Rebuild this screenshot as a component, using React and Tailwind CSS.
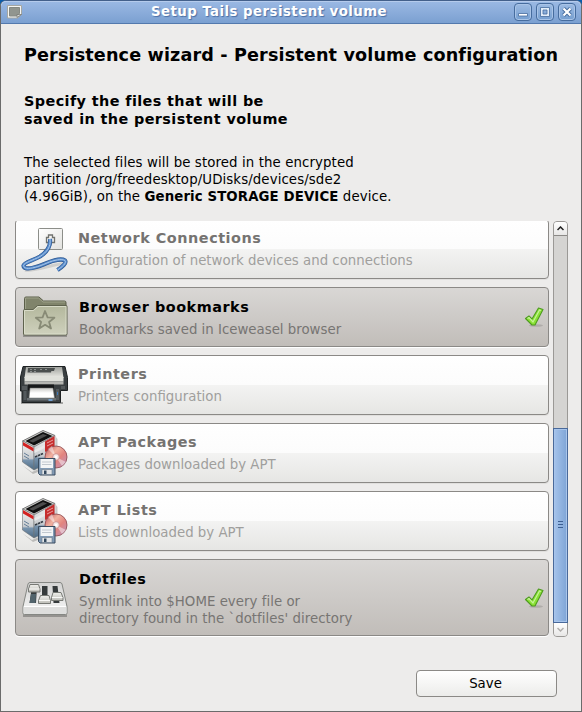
import React from "react";

const CABLE = "M29 14C30 22 26 27 19 31.500C12 35.500 3 37.500 2.500 40.500C3 46.500 17 42 26 38C33 35 41 33.500 44 35.500C46 38 41 42 36.500 45";

function NetworkIcon() {
  return (
    <svg width="48" height="48" viewBox="0 0 48 48" className="block overflow-visible">
      <defs>
        <linearGradient id="plate" x1="0" y1="0" x2="1" y2="1">
          <stop offset="0" stopColor="#fff" />
          <stop offset="1" stopColor="#e2e2df" />
        </linearGradient>
      </defs>
      <rect x="17.500" y="3.500" width="24" height="21" rx="1" fill="url(#plate)" stroke="#8c8e89" />
      <path d="M25.500 17.500v-5h2v-2.500h4v2.500h2v5z" fill="#f4f4f2" stroke="#70726e" strokeWidth="1.300" />
      <path d="M4 45C12 47 30 40 42 38.500" fill="none" stroke="#000" strokeOpacity=".12" strokeWidth="3" />
      <path d={CABLE} fill="none" stroke="#2c5690" strokeWidth="4.200" />
      <path d={CABLE} fill="none" stroke="#5488c8" strokeWidth="3" />
      <path d={CABLE} fill="none" stroke="#a9c7ea" strokeWidth="1" />
    </svg>
  );
}

function FolderIcon() {
  return (
    <svg width="48" height="48" viewBox="0 0 48 48" className="block overflow-visible">
      <defs>
        <linearGradient id="folder" x1="0" y1="0" x2="0" y2="1">
          <stop offset="0" stopColor="#b3b79c" />
          <stop offset="1" stopColor="#cfd1bd" />
        </linearGradient>
      </defs>
      <path d="M2 43h44" stroke="#000" strokeOpacity=".25" strokeWidth="2" />
      <path d="M3.500 30V5.500q0-1.500 1.500-1.500h13l4.500 4h21q1.500 0 1.500 1.500v20z" fill="#80846b" stroke="#5b5e49" />
      <path d="M4.500 17V5h13l4.500 4h22" fill="none" stroke="#9da18a" />
      <path d="M2.500 41V17.500q0-1 1-1h8.500l4.500-4H45q1 0 1 1V41q0 1-1 1H3.500q-1 0-1-1z" fill="url(#folder)" stroke="#5f634e" />
      <path d="M3.500 40.500V17.500H12.500l4.500-4H45v27.500H3.500" fill="none" stroke="#e0e2d1" strokeOpacity=".8" />
      <path d="M24 18l2.600 6.400 6.800.300-5.300 4.300 1.900 6.500-5.900-3.700-5.900 3.700 1.900-6.500-5.300-4.300 6.800-.300z" fill="#bec1aa" stroke="#888b76" strokeWidth="1.800" strokeLinejoin="round" />
    </svg>
  );
}

function PrinterIcon() {
  return (
    <svg width="48" height="48" viewBox="0 0 48 48" className="block overflow-visible">
      <defs>
        <linearGradient id="printer" x1="0" y1="0" x2="0" y2="1">
          <stop offset="0" stopColor="#a0a29e" />
          <stop offset="1" stopColor="#ecece6" />
        </linearGradient>
        <linearGradient id="paper" x1="0" y1="0" x2="0" y2="1">
          <stop offset="0" stopColor="#c8c8c5" />
          <stop offset=".5" stopColor="#fff" />
        </linearGradient>
      </defs>
      <path d="M0 42h42" stroke="#000" strokeOpacity=".3" strokeWidth="2" />
      <path d="M2 5.500h42l2.500 11v13h-7v12H1V30h-1.500V16z" fill="#3a3f41" stroke="#1d2122" strokeLinejoin="round" />
      <path d="M5 6h36l1.500 11H3.500z" fill="url(#printer)" />
      <path d="M3.500 16h39v4.500h-39z" fill="#e0e1db" />
      <path d="M3.500 20.500h39v3h-39z" fill="#b5b6b2" />
      <path d="M7 7h24l-1 4.500H19.500H6.500zM31 7h3l-1 3h-3z" fill="#4b4f4e" />
      <path d="M9 8.500h2M13 8.500h2M19 8.500h2M24 8.500h2M9 10.500h2M13 10.500h2" stroke="#9b9e9d" strokeWidth=".8" />
      <path d="M1 25v4h5v-4zM40 25v3h4v-3z" fill="#555a5c" />
      <path d="M7 23.500h26v6H7z" fill="#17191a" />
      <path d="M9 27h23l1.500 10H8z" fill="url(#paper)" stroke="#6b6d6b" strokeWidth=".5" />
      <path d="M2.500 30h3v9h-3zM35 28h3v11h-3z" fill="#545a5d" />
      <path d="M6 37h29v2.500H6z" fill="#6b7174" />
      <rect x="27.500" y="38" width="4" height="2" fill="#729fcf" />
      <path d="M36.500 31v3" stroke="#3b78bb" />
    </svg>
  );
}

function PackageIcon() {
  return (
    <svg width="48" height="48" viewBox="0 0 48 48" className="block overflow-visible">
      <defs>
        <linearGradient id="disc" x1="0" y1="0" x2="1" y2="1">
          <stop offset="0" stopColor="#b94b55" />
          <stop offset=".35" stopColor="#f0b2a0" />
          <stop offset=".6" stopColor="#e2847e" />
          <stop offset="1" stopColor="#b895c7" />
        </linearGradient>
        <linearGradient id="boxside" x1="0" y1="0" x2="0" y2="1">
          <stop offset="0" stopColor="#f4f4f4" />
          <stop offset=".6" stopColor="#c9cccf" />
          <stop offset=".66" stopColor="#7894ae" />
          <stop offset="1" stopColor="#4b6983" />
        </linearGradient>
      </defs>
      <path d="M1 36L11 43 35 32V8l1.500 2v25L12 45z" fill="#000" fillOpacity=".2" />
      <path d="M1.500 12L22 1.500 34 6.500 13 18z" fill="#cfcfcd" stroke="#5c5c5c" strokeWidth=".8" />
      <path d="M4.500 12L22 3 31.500 7 13 16.500z" fill="#101010" />
      <path d="M8 12l14-7 4 1.500-14 7z" fill="#4c4c4c" />
      <path d="M1.500 12l11.500 6v23L1.500 33z" fill="url(#boxside)" stroke="#6d7174" strokeWidth=".6" />
      <path d="M13 18L34 6.500V31L13 41z" fill="url(#boxside)" stroke="#77797a" strokeWidth=".6" />
      <path d="M2 13l10.500 6v3.500L2 16.500z" fill="#d32222" />
      <path d="M24 12.500l9.500-5.500v11l-9.500 5z" fill="#c62d2d" />
      <path d="M26 14l6-3M26 17l6-3" stroke="#f4bcbc" strokeWidth=".8" />
      <path d="M13.500 21l10-5v3l-10 5z" fill="#e9e9e9" />
      <path d="M14 28l8-3.500" stroke="#343b43" strokeWidth="1.800" strokeDasharray="2.500 .6" />
      <path d="M3 24l5 3M3 27l5 3" stroke="#657f99" />
      <circle cx="35" cy="28" r="11" fill="url(#disc)" stroke="#8a464c" strokeWidth=".8" />
      <path d="M35 28L27 20l4-3zM35 28l10 5-4 4z" fill="#fff" fillOpacity=".45" />
      <circle cx="35" cy="28" r="3.300" fill="#f5e7e6" stroke="#c88c8c" strokeWidth=".8" />
      <circle cx="35" cy="28" r="1.300" fill="#fff" />
      <path d="M17.500 29.500h16.500v16.500H19l-1.500-1.500z" fill="#819ab4" stroke="#3b4d60" />
      <path d="M19.500 30h12.500v9H19.500z" fill="#f3f5f6" />
      <path d="M21 33h9.500M21 35.500h9.500" stroke="#c1c8cf" />
      <path d="M21 40.500h10v5H21z" fill="#e3e5e7" stroke="#6a7a8a" strokeWidth=".6" />
      <path d="M23 41.500h2.500v3.500H23z" fill="#33485d" />
    </svg>
  );
}

function SlidersIcon() {
  return (
    <svg width="48" height="48" viewBox="0 0 48 48" className="block overflow-visible">
      <defs>
        <linearGradient id="panel" x1="0" y1="0" x2="0" y2="1">
          <stop offset="0" stopColor="#d3d3d2" />
          <stop offset="1" stopColor="#f8f8f8" />
        </linearGradient>
        <linearGradient id="knob" x1="0" y1="0" x2="0" y2="1">
          <stop offset="0" stopColor="#f0f0ec" />
          <stop offset="1" stopColor="#bdbdb7" />
        </linearGradient>
      </defs>
      <path d="M2 41.500h44" stroke="#000" strokeOpacity=".25" strokeWidth="3" />
      <path d="M9 8.500h30q1.500 0 2 1.500L46 32.500v6.500q0 1.500-1.500 1.500H3.500Q2 40.500 2 39V32.500L7 10q.5-1.500 2-1.500z" fill="url(#panel)" stroke="#858783" />
      <path d="M2.500 33h43v5.500q0 1.500-1.500 1.500H4q-1.500 0-1.500-1.500z" fill="#dededd" />
      <path d="M3 32.500h42" stroke="#fff" />
      <path d="M11 12h5l-1 17H8.500zM21 12h5.500v17H21zM31.500 12h5l2 17h-6z" fill="#353a3b" />
      <path d="M10 20h5l-.5 9H8.500z" fill="#52646c" />
      <g fill="url(#knob)" stroke="#777974" strokeLinejoin="round">
        <path d="M9 10.500h8.500l1.500 4.500v3H7.500v-3z" />
        <path d="M19.500 21.500h8.500l1.500 5v3H17.500v-3z" />
        <path d="M32 18.500h8l2 5v3H30.500v-3z" />
      </g>
      <path d="M8 15h10.500M18 26.500h11M31 23.500h10.500" stroke="#f9f9f7" />
    </svg>
  );
}

function Check() {
  return (
    <svg width="22" height="22" viewBox="0 0 22 22" className="block shrink-0 overflow-visible">
      <ellipse cx="12" cy="19.500" rx="7" ry="1.300" fill="#000" fillOpacity=".13" />
      <path d="M1.500 12.500l3.500-2.500 3 3L14.500 2l4.500 1.500L11 19H8z" fill="#8ae234" stroke="#4e9a20" strokeWidth="1.100" strokeLinejoin="round" />
      <path d="M3.500 12.500l1.500-1L9 16 15.500 4l1.500.5" fill="none" stroke="#c4f398" strokeWidth="1.200" />
    </svg>
  );
}

const items = [
  { icon: NetworkIcon, name: "Network Connections", lines: ["Configuration of network devices and connections"] },
  { icon: FolderIcon, name: "Browser bookmarks", lines: ["Bookmarks saved in Iceweasel browser"], active: true },
  { icon: PrinterIcon, name: "Printers", lines: ["Printers configuration"] },
  { icon: PackageIcon, name: "APT Packages", lines: ["Packages downloaded by APT"] },
  { icon: PackageIcon, name: "APT Lists", lines: ["Lists downloaded by APT"] },
  { icon: SlidersIcon, name: "Dotfiles", lines: ["Symlink into $HOME every file or", "directory found in the `dotfiles' directory"], active: true },
];

function Item({ icon: Icon, name, lines, active }) {
  return (
    <div
      className={
        "flex shrink-0 items-center rounded-[4px] border border-[#8b8986] pl-[5px] pr-[2px] " +
        (lines.length > 1 ? "h-[77px] " : "h-[60px] ") +
        (active
          ? "bg-linear-to-b from-[#d9d7d5] to-[#c1bdb9] shadow-[0_1px_0_#fff]"
          : "bg-[linear-gradient(#ffffff,#fcfcfc_50%,#f3f3f2_50%,#e6e6e4)] shadow-[0_1px_0_#e0dfdd]")
      }
    >
      <Icon />
      <div className={"flex-1 whitespace-nowrap " + (active ? "pt-px pl-[10px]" : "-mt-px pl-[9px]")}>
        <div className={"pb-[2px] text-[14.4px] leading-[18px] font-bold tracking-[0.53px] " + (active ? "text-black" : "text-[#757371]")}>{name}</div>
        <div className={"pt-[3px] text-[13.33px] leading-[17px] " + (active ? "text-[#777573]" : "text-[#a09f9d]")}>
          {lines.map((l) => (
            <div key={l} className={lines.length > 1 ? "tracking-[0.03px]" : ""}>{l}</div>
          ))}
        </div>
      </div>
      {active && <Check />}
    </div>
  );
}

function WindowButton({ children }) {
  return (
    <div className="flex h-[18px] w-[18px] items-center justify-center rounded-[4px] border border-[#466c9e] bg-linear-to-b from-[#9dbbe3] to-[#769fd0] shadow-[inset_0_0_0_1px_#a9c4e7]">
      <svg width="12" height="12" viewBox="0 0 12 12" className="block">{children}</svg>
    </div>
  );
}

export default function App() {
  return (
    <div className="h-[712px] w-[582px] overflow-hidden bg-[#0a5cab] font-['DejaVu_Sans',sans-serif] text-black">
      <div className="flex h-full flex-col rounded-t-[6px] border border-[#6b6b6b] border-t-[#43608b] bg-[#edeceb]">
        <div className="flex h-[23px] shrink-0 items-center rounded-t-[5px] border-b border-[#5379ad] bg-linear-to-b from-[#9bb9e4] to-[#7ba0d1] pl-[6px] pr-[5px] shadow-[inset_0_1px_0_#b5cbec]">
          <svg width="16" height="14" viewBox="0 0 16 14" className="block">
            <path d="M.5.500h14v9l-4 3.500H.5z" fill="#f5f5f3" stroke="#a5a7a2" />
            <path d="M2.500 2.500h10v6l-3 2.500h-7z" fill="#91958f" stroke="#858983" />
            <path d="M10 12.500V9.500h4.500z" fill="#d9dad6" stroke="#6e706c" strokeWidth=".7" />
          </svg>
          <div className="flex-1 pl-px text-center text-[13.33px] leading-[20px] font-bold tracking-[0.45px] whitespace-nowrap text-white [text-shadow:1px_1px_1px_#4a6fa5]">
            Setup Tails persistent volume
          </div>
          <div className="flex gap-[4px]">
            <WindowButton><path d="M1.500 7.500h9v2.500h-9z" fill="#fff" stroke="#466c9e" strokeWidth=".8" /></WindowButton>
            <WindowButton><path d="M1.500 1.500h9v9h-9zM4 4h4v4H4z" fillRule="evenodd" fill="#e3edf8" stroke="#466c9e" strokeWidth=".8" /></WindowButton>
            <WindowButton><path d="M2.500 2.500l7 7M9.500 2.500l-7 7" stroke="#466c9e" strokeWidth="4" /><path d="M2.500 2.500l7 7M9.500 2.500l-7 7" stroke="#fff" strokeWidth="2.200" /></WindowButton>
          </div>
        </div>

        <h1 className="mt-[18px] pl-[23px] text-[17.6px] leading-[26px] font-bold tracking-[0.14px] whitespace-nowrap">
          Persistence wizard - Persistent volume configuration
        </h1>
        <h2 className="mt-[24px] pl-[23px] text-[14.4px] leading-[18px] font-bold tracking-[0.4px] whitespace-nowrap">
          Specify the files that will be<br />saved in the persistent volume
        </h2>
        <p className="mt-[26px] pl-[23px] text-[13.33px] leading-[17px] tracking-[0.1px] whitespace-nowrap">
          The selected files will be stored in the encrypted<br />
          partition /org/freedesktop/UDisks/devices/sde2<br />
          (4.96GiB), on the <b>Generic STORAGE DEVICE</b> device.
        </p>

        <div className="mt-[16px] ml-[14px] flex h-[416px] shrink-0 gap-[4px]">
          <div className="flex w-[534px] flex-col justify-end gap-[8px] overflow-hidden pb-px">
            {items.map((it) => (
              <Item key={it.name} {...it} />
            ))}
          </div>
          <div className="flex w-[15px] flex-col rounded-[4px] border border-[#9b9996] bg-[#d5d4d2]">
            <div className="flex h-[14px] items-center justify-center rounded-t-[3px] border-b border-[#8b8986] bg-linear-to-b from-white to-[#e8e7e6]">
              <svg width="7" height="5" viewBox="0 0 7 5"><path d="M.5 4L3.500 1l3 3" fill="none" stroke="#222" strokeWidth="1.500" /></svg>
            </div>
            <div className="flex-1" />
            <div className="-mx-px flex h-[195px] flex-col items-center justify-center gap-[2px] border border-[#49699a] bg-linear-to-r from-[#a5c3eb] to-[#7fa5d6] pb-[2px] shadow-[inset_0_0_0_1px_#a8c5eb]">
              <div className="h-px w-[5px] bg-[#3c5f92]" />
              <div className="h-px w-[5px] bg-[#3c5f92]" />
              <div className="h-px w-[5px] bg-[#3c5f92]" />
            </div>
            <div className="flex h-[13px] items-center justify-center rounded-b-[3px] bg-linear-to-b from-white to-[#e8e7e6]">
              <svg width="7" height="5" viewBox="0 0 7 5"><path d="M.5 1l3 3 3-3" fill="none" stroke="#b0aeac" strokeWidth="1.500" /></svg>
            </div>
          </div>
        </div>

        <div className="mt-[33px] flex justify-end pr-[24px]">
          <button className="h-[27px] w-[141px] rounded-[4px] border border-[#8b8986] bg-linear-to-b from-white to-[#ececea] pr-[2px] text-[13.33px] leading-[25px]">
            Save
          </button>
        </div>
      </div>
    </div>
  );
}
